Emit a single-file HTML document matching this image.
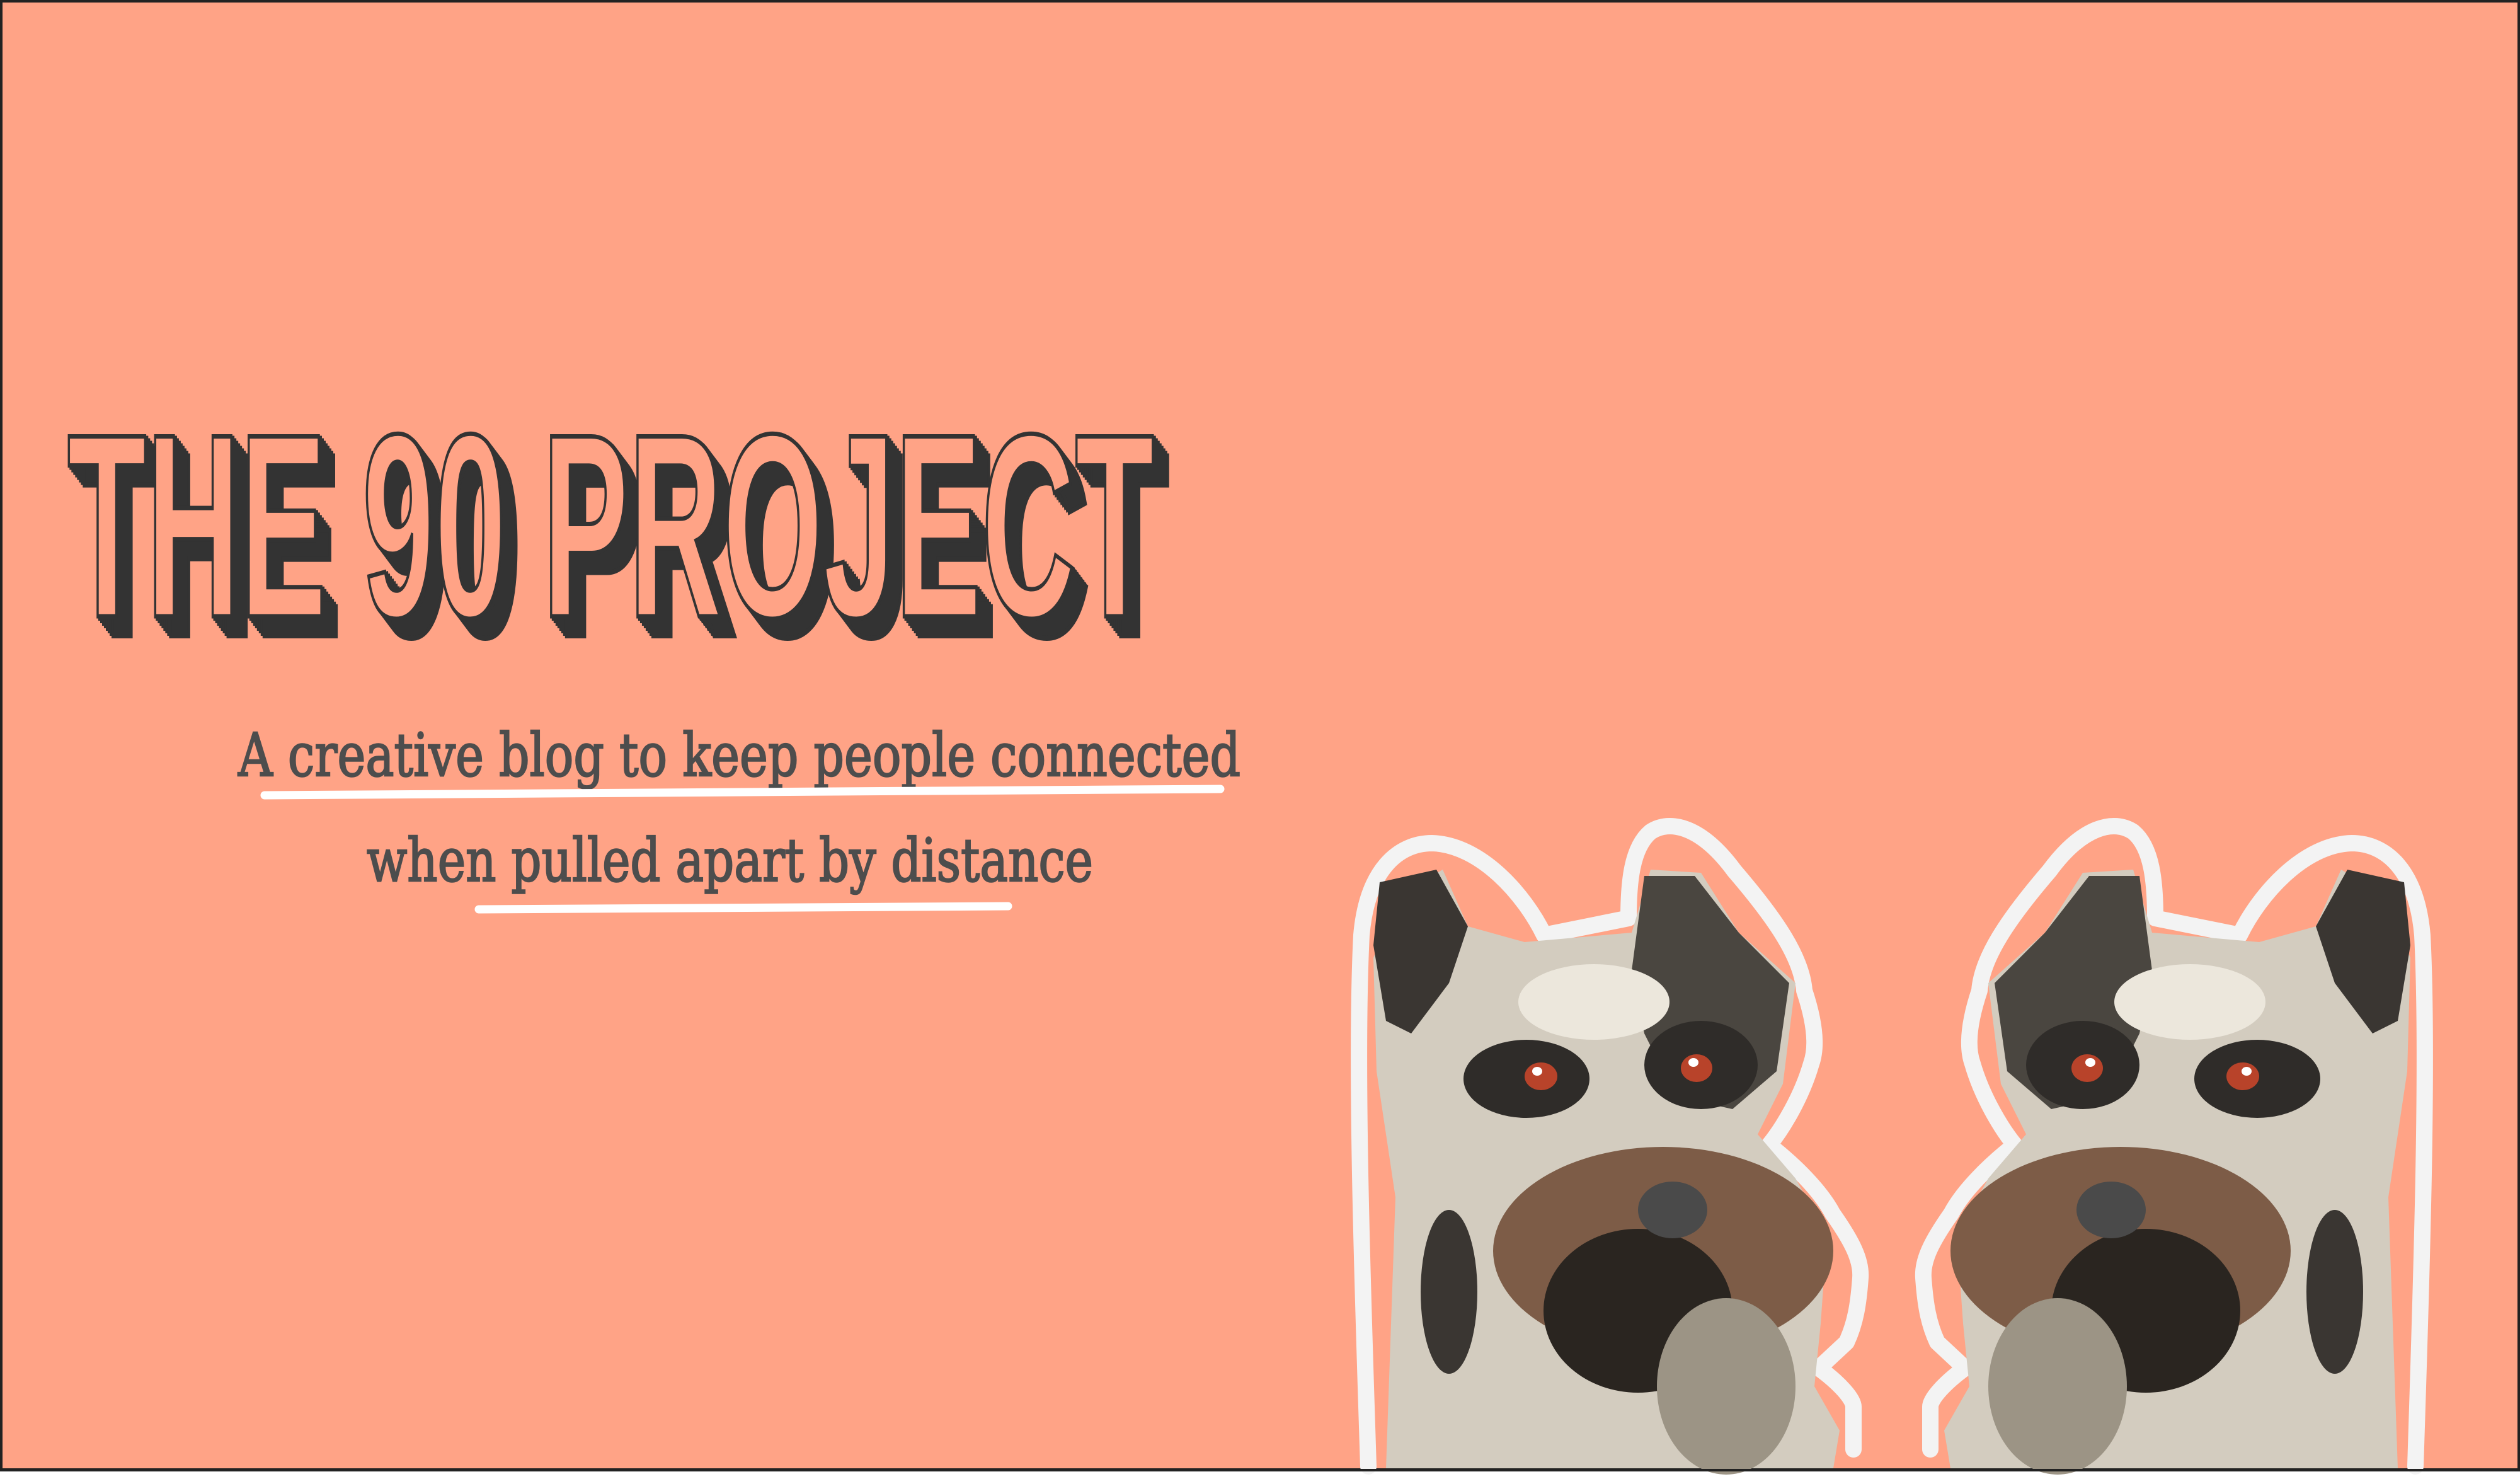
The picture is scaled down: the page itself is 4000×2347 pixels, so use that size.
<!DOCTYPE html>
<html><head><meta charset="utf-8"><style>
html,body{margin:0;padding:0;background:#fff}
svg{display:block}
</style></head><body>
<svg width="4000" height="2347" viewBox="0 0 4000 2347" xmlns="http://www.w3.org/2000/svg">
<rect x="0" y="0" width="4000" height="2347" fill="#fff"/>
<rect x="2" y="2" width="3996" height="2330" fill="#ffa386" stroke="#222" stroke-width="4"/>
<g font-family="'Liberation Sans Narrow', 'Liberation Sans', sans-serif" font-weight="bold" font-size="415">
<g fill="#333" stroke="#333" stroke-width="8">
<text x="110" y="981" textLength="1725" lengthAdjust="spacingAndGlyphs">THE 90 PROJECT</text>
<text x="113" y="985" textLength="1725" lengthAdjust="spacingAndGlyphs">THE 90 PROJECT</text>
<text x="116" y="989" textLength="1725" lengthAdjust="spacingAndGlyphs">THE 90 PROJECT</text>
<text x="119" y="993" textLength="1725" lengthAdjust="spacingAndGlyphs">THE 90 PROJECT</text>
<text x="122" y="997" textLength="1725" lengthAdjust="spacingAndGlyphs">THE 90 PROJECT</text>
<text x="125" y="1001" textLength="1725" lengthAdjust="spacingAndGlyphs">THE 90 PROJECT</text>
<text x="128" y="1005" textLength="1725" lengthAdjust="spacingAndGlyphs">THE 90 PROJECT</text>
<text x="131" y="1009" textLength="1725" lengthAdjust="spacingAndGlyphs">THE 90 PROJECT</text>
</g>
<text x="107" y="978" textLength="1725" lengthAdjust="spacingAndGlyphs" fill="#ffa386" stroke="#333" stroke-width="7">THE 90 PROJECT</text>
</g>
<g font-family="'DejaVu Serif', 'Liberation Serif', serif" font-size="95" fill="#4d4d4d" stroke="#4d4d4d" stroke-width="2.5">
<text x="378" y="1231" textLength="1591" lengthAdjust="spacingAndGlyphs">A creative blog to keep people connected</text>
<text x="582" y="1398" textLength="1153" lengthAdjust="spacingAndGlyphs">when pulled apart by distance</text>
</g>
<g stroke="#fff" stroke-width="13" stroke-linecap="round" fill="none">
<path d="M420 1262 Q1200 1256 1937 1252"/>
<path d="M760 1443 Q1200 1441 1600 1438"/>
</g>
<defs>
<g id="dog">
<path d="M2172 2327 C2165 2100 2150 1700 2161 1484 C2170 1380 2220 1338 2273 1338 C2350 1340 2420 1420 2451 1484 L2585 1457 C2585 1400 2590 1345 2620 1320 C2650 1300 2700 1310 2753 1382 C2820 1460 2860 1520 2864 1572 C2880 1620 2885 1660 2875 1688 C2860 1740 2830 1790 2808 1817 C2850 1850 2890 1890 2909 1926 C2940 1970 2955 2000 2953 2028 C2950 2070 2945 2100 2931 2130 L2887 2171 C2920 2195 2942 2220 2942 2232 L2942 2300" fill="none" stroke="#f3f3f3" stroke-width="26" stroke-linecap="round" stroke-linejoin="round"/>
<path d="M2200 2330 L2215 1900 L2185 1700 L2180 1520 L2220 1420 L2290 1380 L2330 1470 L2420 1495 L2590 1480 L2620 1380 L2700 1385 L2760 1480 L2850 1560 L2830 1720 L2790 1800 L2850 1870 L2900 1960 L2890 2100 L2880 2200 L2920 2270 L2910 2330 Z" fill="#d3ccbf"/>
<path d="M2190 1400 L2280 1380 L2330 1470 L2300 1560 L2240 1640 L2200 1620 L2180 1500 Z" fill="#3a3632"/>
<path d="M2610 1390 L2690 1390 L2760 1480 L2840 1560 L2820 1700 L2750 1760 L2660 1740 L2610 1640 L2590 1540 Z" fill="#4a4640"/>
<ellipse cx="2530" cy="1590" rx="120" ry="60" fill="#ece7dc"/>
<ellipse cx="2423" cy="1712" rx="100" ry="62" fill="#2f2c29"/>
<ellipse cx="2700" cy="1690" rx="90" ry="70" fill="#2f2c29"/>
<ellipse cx="2446" cy="1708" rx="26" ry="22" fill="#b8432a"/>
<ellipse cx="2693" cy="1695" rx="25" ry="22" fill="#b8432a"/>
<ellipse cx="2440" cy="1700" rx="8" ry="7" fill="#fff"/>
<ellipse cx="2688" cy="1686" rx="8" ry="7" fill="#fff"/>
<ellipse cx="2640" cy="1985" rx="270" ry="165" fill="#7d5c47"/>
<ellipse cx="2600" cy="2080" rx="150" ry="130" fill="#2a2520"/>
<ellipse cx="2655" cy="1920" rx="55" ry="45" fill="#4a4a4a"/>
<ellipse cx="2740" cy="2200" rx="110" ry="140" fill="#9c9485"/>
<ellipse cx="2300" cy="2050" rx="45" ry="130" fill="#3a3632"/>
</g>
</defs>
<use href="#dog"/>
<use href="#dog" transform="translate(6006,0) scale(-1,1)"/>
<rect x="0" y="2331" width="4000" height="4" fill="#222"/>
</svg>
</body></html>
